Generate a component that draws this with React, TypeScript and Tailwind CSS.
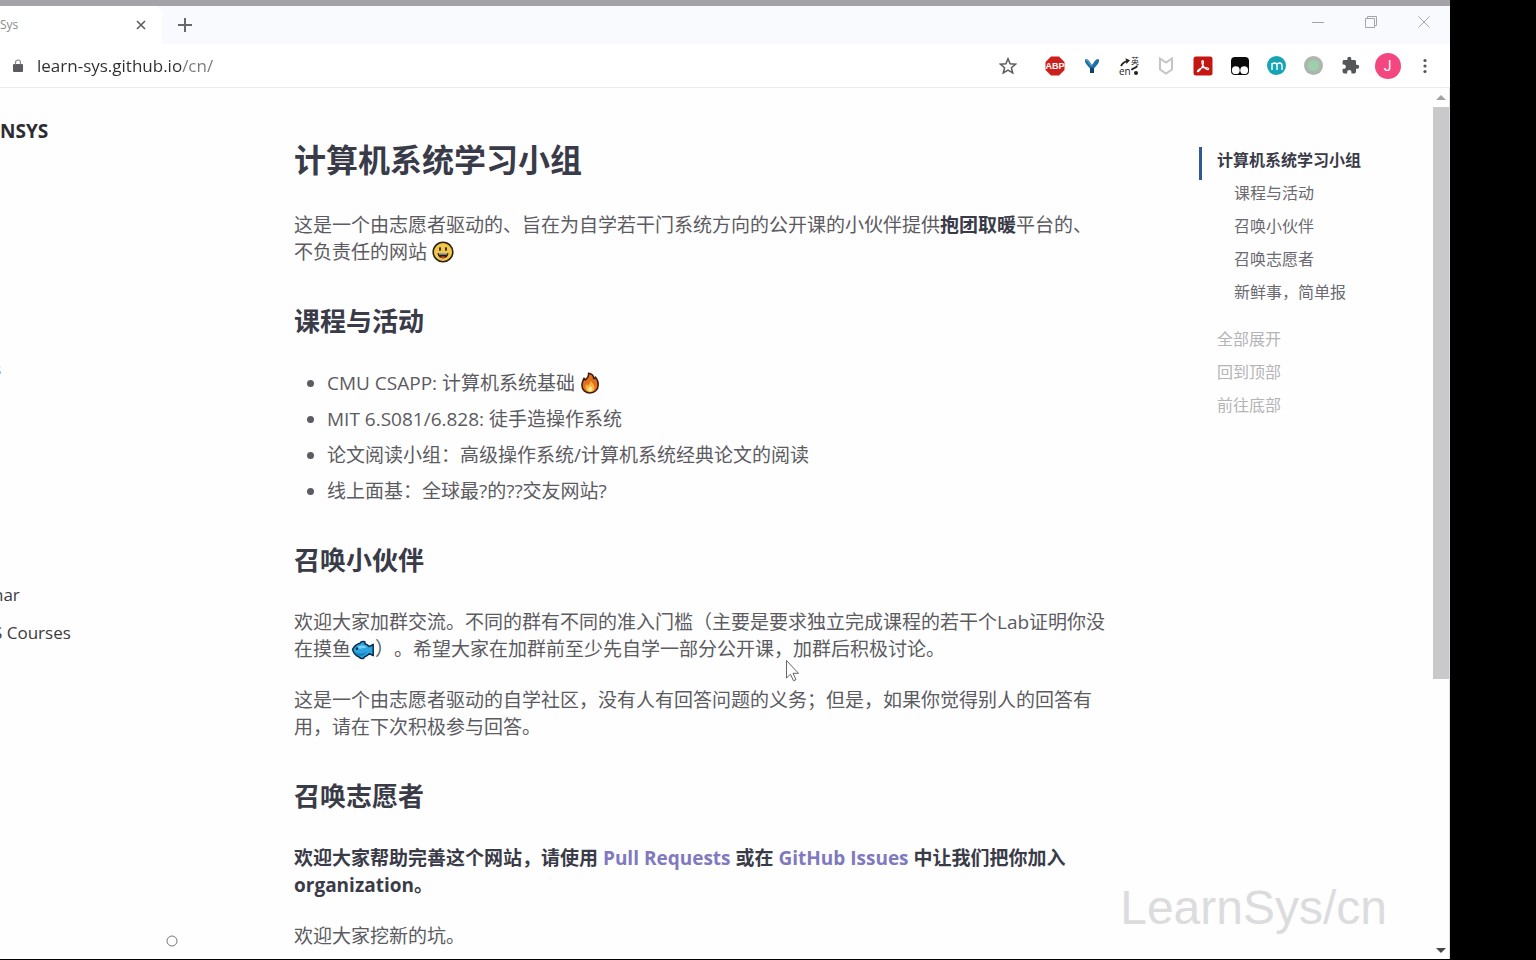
import type { ReactNode } from "react";

const CHAPTERS = [
  { id: "courses", title: "课程与活动" },
  { id: "partners", title: "召唤小伙伴" },
  { id: "volunteers", title: "召唤志愿者" },
  { id: "news", title: "新鲜事，简单报" },
];

const TOC_ACTIONS = ["全部展开", "回到顶部", "前往底部"];

function SmileEmoji() {
  return (
    <svg viewBox="0 0 22 22" className="inline-block size-[22px] align-[-4px]" role="img" aria-label="smile">
      <circle cx="11" cy="11" r="9.8" fill="#f3c64c" stroke="#2b2416" strokeWidth="1.6" />
      <ellipse cx="8" cy="8" rx="1" ry="2" fill="#2b2416" />
      <ellipse cx="14" cy="8" rx="1" ry="2" fill="#2b2416" />
      <path d="M5.6 12h10.8c0 3.400-2.300 5.400-5.400 5.400S5.600 15.400 5.600 12Z" fill="#2b1d14" />
      <path d="M6.800 12.400h8.400v1H6.800z" fill="#fff" />
      <path d="M8.200 16.200c1.600-1.300 4-1.300 5.600 0-1.600 1.100-4 1.100-5.600 0Z" fill="#d8452f" />
    </svg>
  );
}

function FireEmoji() {
  return (
    <svg viewBox="0 0 20 22" className="inline-block h-[22px] w-5 align-[-4px]" role="img" aria-label="fire">
      <path
        d="M8.500 1.200c4 .6 5.300 3 5.200 5.600 1-.3 1.500-1 1.600-1.800 2 2.300 3 5 2.900 8.200-.2 4.700-3.700 7.700-8.100 7.700-4.600 0-8.100-3-8.200-7.400-.1-3 1.300-4.700 2-7.300.7.500 1.100 1.100 1.300 1.900C7.400 6.300 9 4 8.500 1.200Z"
        fill="#e0701c"
        stroke="#3a1d10"
        strokeWidth="1.500"
        strokeLinejoin="round"
      />
      <path
        d="M10.800 8.300c.3 2.400 3.800 4 3.800 7.300 0 2.600-2 4.300-4.500 4.300-2.700 0-4.700-1.700-4.700-4.300 0-1.500.6-2.500 1.300-3.500.5.600.8 1 1 1.600 1.700-1.300 2.900-3 3.100-5.400Z"
        fill="#f8b23a"
      />
      <path d="M10.500 14c1.300 1.300 2 2.200 2 3.400 0 1.300-1 2.100-2.300 2.100-1.400 0-2.300-.9-2.300-2.100 0-1.300 1.400-2 2.600-3.400Z" fill="#fde68e" />
    </svg>
  );
}

function FishEmoji() {
  return (
    <svg viewBox="0 0 24 20" className="inline-block h-5 w-6 align-[-4px]" role="img" aria-label="fish">
      <path
        d="M1.500 9.500C3.500 5.500 6.500 3.800 9 3.200c1-1.600 3-2 4.800-1.400L14 3.800c1.800.6 3.200 1.600 4.200 2.800l4-2.200v11.300l-4-2c-1.300 1.500-2.800 2.500-4.400 3l-1.500 1.800c-2 .2-3.400-.3-4.200-1.500C5.500 16 3 14 1.500 9.500Z"
        fill="#2ba5e0"
        stroke="#0d2c49"
        strokeWidth="1.500"
        strokeLinejoin="round"
      />
      <path d="M5 8c3-3 8-3.500 11-.5-3 .2-8 2.500-11 .5Z" fill="#7bd0f5" />
      <path d="M3 12c4 2 9 2.500 13-.5-2 5-9 6-13 .5Z" fill="#1478b9" />
      <circle cx="6" cy="8.600" r="1.300" fill="#0d2c49" />
    </svg>
  );
}

function TabStrip() {
  return (
    <div className="flex h-[38px] items-start bg-[#f8fafe]">
      <div className="flex h-full w-[162px] items-center justify-between rounded-tr-lg bg-white pr-[14px]">
        <span className="text-xs text-[#8c8c8c]">Sys</span>
        <button type="button" aria-label="Close tab" className="p-[2px]">
          <svg viewBox="0 0 10 10" className="size-[10px]" stroke="#5b5d60" strokeWidth="1.600">
            <path d="M1 1l8 8M9 1L1 9" />
          </svg>
        </button>
      </div>
      <button type="button" aria-label="New tab" className="ml-4 flex h-full items-center">
        <svg viewBox="0 0 14 14" className="size-[14px]" stroke="#66686b" strokeWidth="2">
          <path d="M7 0v14M0 7h14" />
        </svg>
      </button>
      <div className="ml-auto flex h-8">
        <WindowButton label="Minimize">
          <path d="M0 6.500h12" />
        </WindowButton>
        <WindowButton label="Restore">
          <path d="M.5 2.500h9v9h-9zM2.500 2.500v-2h9v9h-2" />
        </WindowButton>
        <WindowButton label="Close">
          <path d="M.5.5l11 11M11.500.5l-11 11" />
        </WindowButton>
      </div>
    </div>
  );
}

function WindowButton({ label, children }: { label: string; children: ReactNode }) {
  return (
    <button type="button" aria-label={label} className="flex w-[53px] items-center justify-center">
      <svg viewBox="0 0 12 12" className="size-3" fill="none" stroke="#a3a5a8">
        {children}
      </svg>
    </button>
  );
}

function ToolButton({ label, className = "", children }: { label: string; className?: string; children: ReactNode }) {
  return (
    <button type="button" aria-label={label} className={`flex h-8 w-[37px] items-center justify-center ${className}`}>
      {children}
    </button>
  );
}

function Toolbar() {
  return (
    <div className="flex h-11 items-center border-b border-[#ececee] bg-white pr-[7px] pl-[13px]">
      <svg viewBox="0 0 10 13" className="h-[13px] w-[10px]" aria-hidden="true">
        <rect x="0" y="5" width="10" height="8" rx="1" fill="#5a5c5f" />
        <path d="M2.500 5.500V3.500a2.500 2.500 0 0 1 5 0v2" fill="none" stroke="#8a8c8f" strokeWidth="1.200" />
      </svg>
      <input
        type="text"
        aria-label="Address"
        defaultValue="learn-sys.github.io/cn/"
        className="ml-[14px] min-w-0 flex-1 bg-[linear-gradient(to_right,#2d2e30_145px,#77797c_145px)] bg-clip-text text-[17px] text-transparent outline-none"
      />
      <ToolButton label="Bookmark" className="mr-[10px]">
        <svg viewBox="0 0 18 18" className="size-[18px]" fill="none" stroke="#5b5d60" strokeWidth="1.500">
          <path d="M9 1.800l2.100 5 5.400.4-4.100 3.500 1.300 5.300L9 13.100 4.300 16l1.300-5.300L1.500 7.200l5.400-.4z" />
        </svg>
      </ToolButton>
      <ToolButton label="AdBlock Plus">
        <svg viewBox="0 0 20 20" className="size-5">
          <path d="M6 .5h8L19.500 6v8L14 19.500H6L.5 14V6z" fill="#cf1f1c" />
          <text x="10" y="13.400" textAnchor="middle" fontSize="9" fontWeight="700" fill="#fff" fontFamily="Liberation Sans">
            ABP
          </text>
        </svg>
      </ToolButton>
      <ToolButton label="Y">
        <svg viewBox="0 0 16 16" className="size-4">
          <path d="M1 1.500C2.800.8 4 1.300 5 2.800L8 7l3-4.200c1-1.500 2.200-2 4-1.300.3 2.400-.6 4-2.200 5.800L10 10.500V15H6v-4.500L3.200 7.300C1.600 5.500.7 3.900 1 1.500Z" fill="#1e6ea8" />
          <path d="M6 10.500L8 9l2 1.500V15H6z" fill="#154264" />
          <path d="M2.200 2.500c1-.2 1.600.3 2.300 1.300L8 8.500" fill="none" stroke="#63b4df" />
        </svg>
      </ToolButton>
      <ToolButton label="Translate">
        <svg viewBox="0 0 20 20" className="size-5 overflow-visible" fill="none" stroke="#222" strokeWidth="1.800">
          <path d="M2 10c1.500-3 3.500-4.500 6-4.700" />
          <path d="M6.500 2.300l4.500 2L7.500 8z" fill="#222" stroke="none" />
          <path d="M18 9.500c0 3-3.500 1.500-5.500 4.500" />
          <circle cx="17" cy="17" r="2" fill="#222" stroke="none" />
          <text x="0" y="19" fontSize="10" fill="#222" stroke="none" fontFamily="Open Sans">
            en
          </text>
          <text x="12" y="8" fontSize="8" fill="#222" stroke="none" fontFamily="Noto Sans CJK SC">
            英
          </text>
        </svg>
      </ToolButton>
      <ToolButton label="Shield">
        <svg viewBox="0 0 16 18" className="h-[18px] w-4" fill="none" stroke="#c4c5c7" strokeWidth="2">
          <path d="M2 1.500l6 4 6-4v11l-6 4-6-4z" />
        </svg>
      </ToolButton>
      <ToolButton label="PDF">
        <svg viewBox="0 0 20 20" className="size-5">
          <rect x=".5" y=".5" width="19" height="19" rx="2.500" fill="#c41712" />
          <path
            d="M4.500 15c1.500-2.500 4-3.300 6.500-3.500 2.500-.1 4.700.3 4.700 1.300 0 1.500-2.700.6-4.400-1.300C9.500 9.500 8.700 7.500 8.800 5.800c.1-1.500 1.600-1.500 1.700 0C10.700 9 7.500 14 5.500 15.500c-.7.5-1.300.2-1-.5Z"
            fill="none"
            stroke="#fff"
            strokeWidth="1.200"
          />
        </svg>
      </ToolButton>
      <ToolButton label="Tampermonkey">
        <svg viewBox="0 0 18 18" className="size-[18px]">
          <rect width="18" height="18" rx="4" fill="#0c0c0c" />
          <circle cx="4.800" cy="13.200" r="3.900" fill="#fff" />
          <circle cx="13.200" cy="13.200" r="3.900" fill="#fff" />
        </svg>
      </ToolButton>
      <ToolButton label="M">
        <span className="flex size-[19px] items-center justify-center rounded-full bg-[#17a5b3]">
          <svg viewBox="0 0 12 8" className="h-2 w-3" fill="none" stroke="#fff" strokeWidth="1.400">
            <path d="M1 8V1M1 3.500C1 1.800 2 1 3.500 1S6 1.800 6 3.500V8M6 3.500C6 1.800 7 1 8.500 1S11 1.800 11 3.500V8" />
          </svg>
        </span>
      </ToolButton>
      <ToolButton label="Status">
        <span className="flex size-[19px] items-center justify-center rounded-full bg-[#aeb5ae]">
          <span className="size-[11px] rounded-full bg-[#9bd0a8]" />
        </span>
      </ToolButton>
      <ToolButton label="Extensions">
        <svg viewBox="0 0 24 24" className="size-[19px]" fill="#545659">
          <path d="M20.500 11H19V7c0-1.100-.9-2-2-2h-4V3.500a2.500 2.500 0 0 0-5 0V5H4c-1.100 0-2 .9-2 2v3.800h1.500c1.500 0 2.700 1.200 2.700 2.700S5 16.200 3.500 16.200H2V20c0 1.100.9 2 2 2h3.800v-1.500c0-1.500 1.200-2.700 2.700-2.700s2.700 1.200 2.700 2.700V22H17c1.100 0 2-.9 2-2v-4h1.500a2.500 2.500 0 0 0 0-5z" />
        </svg>
      </ToolButton>
      <ToolButton label="Profile">
        <span className="flex size-[26px] items-center justify-center rounded-full bg-[#f4467f] font-['Roboto',sans-serif] text-sm text-white">
          J
        </span>
      </ToolButton>
      <ToolButton label="Menu">
        <svg viewBox="0 0 4 16" className="h-4 w-1" fill="#55575a">
          <circle cx="2" cy="2.500" r="1.600" />
          <circle cx="2" cy="8" r="1.600" />
          <circle cx="2" cy="13.500" r="1.600" />
        </svg>
      </ToolButton>
    </div>
  );
}

function Sidebar() {
  return (
    <nav className="flex w-[294px] shrink-0 flex-col overflow-hidden pt-[30px] text-[#3a3b40]">
      <a href="#top" className="text-[19px] leading-[26px] font-bold text-[#2c2d31]">
        NSYS
      </a>
      <a href="#csapp" className="mt-[212px] -ml-[7px] text-[17px] leading-[26px]">
        s
      </a>
      <a href="#seminar" className="mt-[200px] -ml-[7px] text-[17px] leading-[26px]">
        nar
      </a>
      <a href="#other" className="mt-3 -ml-[7px] text-[17px] leading-[26px]">
        S Courses
      </a>
    </nav>
  );
}

function SectionTitle({ id, children }: { id: string; children: ReactNode }) {
  return (
    <h2 id={id} className="mt-[37px] mb-[31px] text-[26px] leading-9 font-bold text-[#3a3b48]">
      {children}
    </h2>
  );
}

function Article() {
  return (
    <main className="min-w-0 flex-1 pt-[52px] pb-2">
      <article className="max-w-[816px] text-[19px] leading-[27px] text-[#5b5b61]">
        <h1 id="top" className="mb-8 text-[32px] leading-10 font-bold text-[#3a3b48]">
          计算机系统学习小组
        </h1>
        <p>
          这是一个由志愿者驱动的、旨在为自学若干门系统方向的公开课的小伙伴提供
          <strong className="font-bold text-[#3a3b48]">抱团取暖</strong>平台的、不负责任的网站 <SmileEmoji />
        </p>

        <SectionTitle id="courses">课程与活动</SectionTitle>
        <ul className="flex list-disc flex-col gap-[9px] pl-[33px]">
          <li>
            CMU CSAPP: 计算机系统基础 <FireEmoji />
          </li>
          <li>MIT 6.S081/6.828: 徒手造操作系统</li>
          <li>论文阅读小组：高级操作系统/计算机系统经典论文的阅读</li>
          <li>线上面基：全球最?的??交友网站?</li>
        </ul>

        <SectionTitle id="partners">召唤小伙伴</SectionTitle>
        <p>
          欢迎大家加群交流。不同的群有不同的准入门槛（主要是要求独立完成课程的若干个Lab证明你没在摸鱼
          <FishEmoji />
          ）。希望大家在加群前至少先自学一部分公开课，加群后积极讨论。
        </p>
        <p className="mt-6">
          这是一个由志愿者驱动的自学社区，没有人有回答问题的义务；但是，如果你觉得别人的回答有用，请在下次积极参与回答。
        </p>

        <SectionTitle id="volunteers">召唤志愿者</SectionTitle>
        <p className="font-bold text-[#3a3b48]">
          欢迎大家帮助完善这个网站，请使用{" "}
          <a href="#pulls" className="text-[#8079c0]">
            Pull Requests
          </a>{" "}
          或在{" "}
          <a href="#issues" className="text-[#8079c0]">
            GitHub Issues
          </a>{" "}
          中让我们把你加入 organization。
        </p>
        <p className="mt-6">欢迎大家挖新的坑。</p>
      </article>
    </main>
  );
}

function TableOfContents() {
  return (
    <aside className="w-[234px] shrink-0 pt-[59px] text-base leading-[27px] text-[#6a6a70]">
      <a href="#top" className="block h-[33px] border-l-[3px] border-[#2f5a94] pl-[15px] font-bold text-[#3a3b48]">
        计算机系统学习小组
      </a>
      <ul className="pl-[35px]">
        {CHAPTERS.map((chapter) => (
          <li key={chapter.id} className="h-[33px]">
            <a href={`#${chapter.id}`}>{chapter.title}</a>
          </li>
        ))}
      </ul>
      <div className="mt-[14px] flex flex-col items-start pl-[18px] text-[#b4b4b7]">
        {TOC_ACTIONS.map((action) => (
          <button key={action} type="button" className="h-[33px] pb-[6px]">
            {action}
          </button>
        ))}
      </div>
    </aside>
  );
}

function Scrollbar() {
  return (
    <div className="flex w-[17px] shrink-0 flex-col items-center border-r border-[#dcdcde] pt-[7px] pb-[6px]">
      <svg viewBox="0 0 10 5" className="h-[5px] w-[10px]" fill="#a2a2a4">
        <path d="M0 5l5-5 5 5z" />
      </svg>
      <div className="mt-[7px] h-2/3 w-4 bg-[#c9c9cb]" />
      <svg viewBox="0 0 10 5" className="mt-auto h-[5px] w-[10px]" fill="#48484a">
        <path d="M0 0l5 5 5-5z" />
      </svg>
    </div>
  );
}

export default function App() {
  return (
    <div className="relative flex min-h-screen bg-black pr-[86px] pb-px font-['Open_Sans','Noto_Sans_CJK_SC',sans-serif] [text-spacing-trim:space-all]">
      <div className="flex min-w-0 flex-1 flex-col bg-[#fefefe]">
        <div className="h-[6px] bg-[#a4a4a8]" />
        <TabStrip />
        <Toolbar />
        <div className="flex flex-1">
          <Sidebar />
          <Article />
          <TableOfContents />
          <Scrollbar />
        </div>
      </div>

      <div className="pointer-events-none absolute right-[149px] bottom-[25px] font-['Liberation_Sans',sans-serif] text-5xl leading-[54px] text-[#dcdcde]">
        LearnSys/cn
      </div>
      <svg viewBox="0 0 16 24" className="pointer-events-none absolute top-[659px] left-[785px] h-6 w-4" fill="#fff" stroke="#66666a">
        <path d="M1.500 1.500v17.500l4-3.700 3 6.500 2.500-1.200-3-6.300h5.500z" />
      </svg>
      <svg viewBox="0 0 12 12" className="pointer-events-none absolute bottom-[13px] left-[166px] size-3" fill="none" stroke="#77777a">
        <circle cx="6" cy="6" r="5" />
      </svg>
    </div>
  );
}
